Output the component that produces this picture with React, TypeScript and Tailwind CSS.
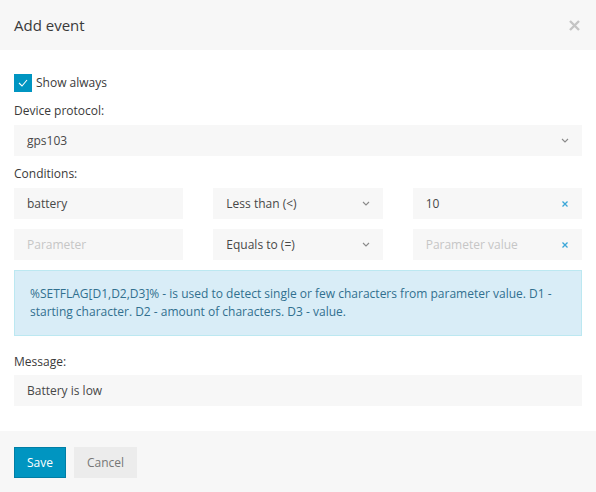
import React from "react";

const font = { fontFamily: '"Open Sans", "Noto Sans", sans-serif' };

function Chevron() {
  return (
    <svg className="h-[5px] w-[8px]" viewBox="0 0 8 5" fill="none" stroke="#8a8a8a" strokeWidth={1.1}>
      <path d="M1 1l3 3 3-3" />
    </svg>
  );
}

function ClearX() {
  return (
    <svg className="h-[6px] w-[6px]" viewBox="0 0 6 6" fill="none" stroke="#3aa6d8" strokeWidth={1.3}>
      <path d="M0.5 0.5l5 5M5.5 0.5l-5 5" />
    </svg>
  );
}

function Select({ value }: { value: string }) {
  return (
    <div className="flex h-[31px] items-center justify-between bg-[#f7f7f7] pl-[13px] pr-[13px] text-[12px] text-[#484848]">
      <span>{value}</span>
      <Chevron />
    </div>
  );
}

function Input({ value, placeholder, clear }: { value?: string; placeholder?: string; clear?: boolean }) {
  return (
    <div className="flex h-[31px] items-center justify-between bg-[#f7f7f7] pl-[13px] pr-[14px] text-[12px]">
      {value ? (
        <span className="text-[#484848]">{value}</span>
      ) : (
        <span className="text-[#c6c6c6]">{placeholder}</span>
      )}
      {clear && <ClearX />}
    </div>
  );
}

export default function App() {
  return (
    <div className="min-h-screen w-[596px] bg-white" style={font}>
      {/* header */}
      <div className="flex h-[50px] items-center justify-between bg-[#f7f7f7] pl-[14px] pr-[16px]">
        <h1 className="text-[15px] text-[#3a3a3a]">Add event</h1>
        <svg className="h-[11px] w-[11px]" viewBox="0 0 11 11" fill="none" stroke="#c4c4c4" strokeWidth={2.4}>
          <path d="M1 1l9 9M10 1l-9 9" />
        </svg>
      </div>

      {/* body */}
      <div className="px-[14px] pt-[24px] pb-[25px] text-[12px] text-[#3a3a3a]">
        <div className="flex h-[18px] items-center gap-[4px]">
          <div className="flex h-[18px] w-[18px] items-center justify-center bg-[#0095c1]">
            <svg className="h-[8px] w-[10px]" viewBox="0 0 10 8" fill="none" stroke="white" strokeWidth={1.1}>
              <path d="M1 4l3 3 5-6" />
            </svg>
          </div>
          <span>Show always</span>
        </div>

        <div className="mt-[9px] mb-[4px] leading-5">Device protocol:</div>
        <Select value="gps103" />

        <div className="mt-[8px] mb-[4px] leading-5">Conditions:</div>
        <div className="grid grid-cols-3 gap-x-[30px] gap-y-[10px]">
          <Input value="battery" />
          <Select value="Less than (<)" />
          <Input value="10" clear />
          <Input placeholder="Parameter" />
          <Select value="Equals to (=)" />
          <Input placeholder="Parameter value" clear />
        </div>

        <div className="mt-[10px] border border-[#bce8f1] bg-[#d9edf7] px-[15px] py-[14px] leading-[18px] text-[#31708f]">
          %SETFLAG[D1,D2,D3]% - is used to detect single or few characters from parameter value. D1 - starting
          character. D2 - amount of characters. D3 - value.
        </div>

        <div className="mt-[16px] mb-[3px] leading-5">Message:</div>
        <Input value="Battery is low" />
      </div>

      {/* footer */}
      <div className="flex h-[61px] items-start gap-[8px] bg-[#f7f7f7] px-[14px] pt-[16px] text-[12px]">
        <button className="h-[31px] border border-[#007ea5] bg-[#0095c1] px-[12px] text-white">Save</button>
        <button className="h-[31px] bg-[#ececec] px-[13px] text-[#777]">Cancel</button>
      </div>
    </div>
  );
}
